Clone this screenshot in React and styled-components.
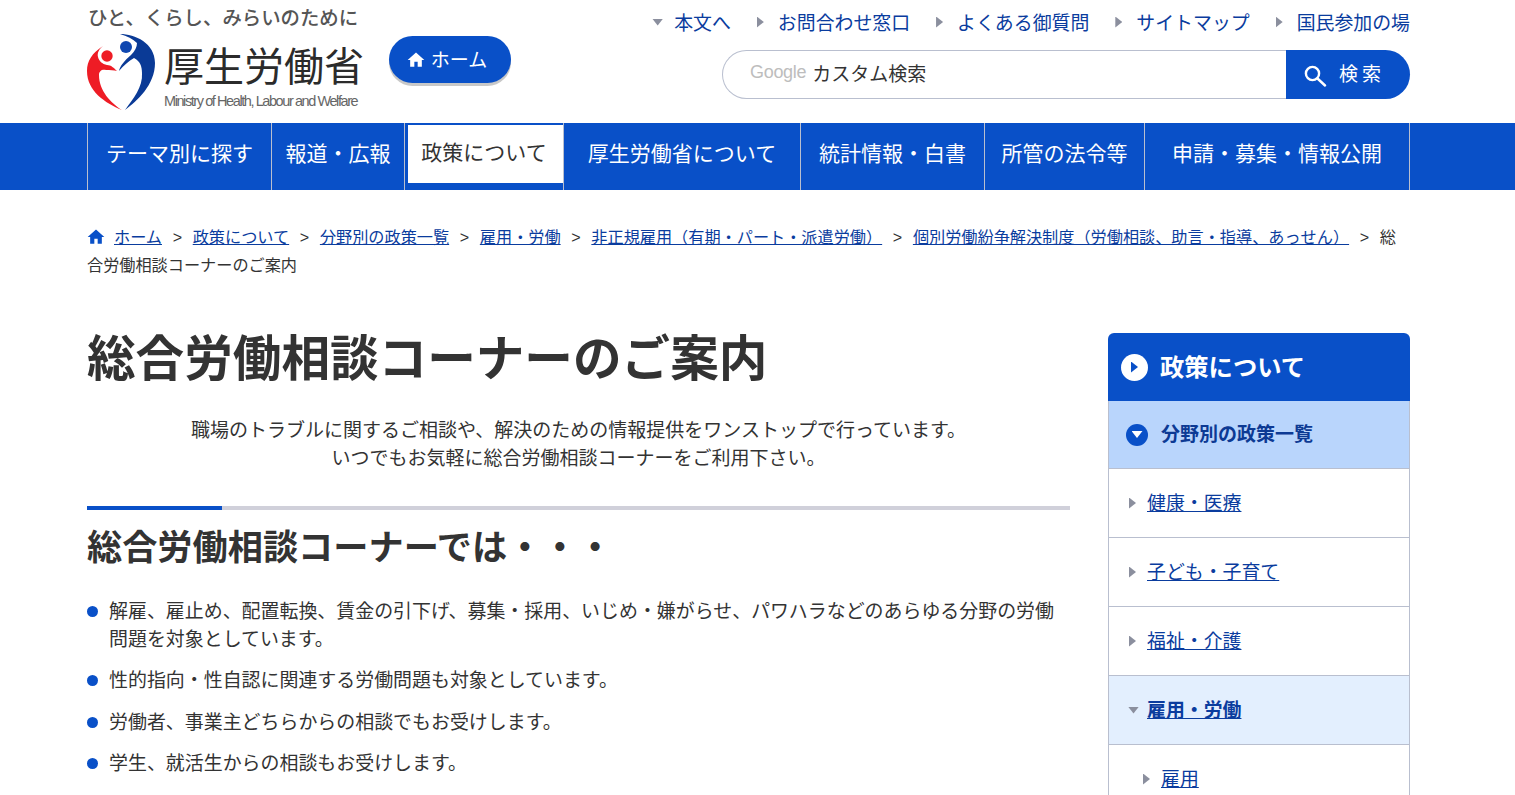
import React from 'react';
import styled, { createGlobalStyle } from 'styled-components';

const BLUE = '#0950c8';
const LINK = '#0a3c9e';
const TEXT = '#333';
const LINE = '#b9bfcf';
const GREY = '#8b8f9e';

const GlobalStyle = createGlobalStyle`
  html, body {
    margin: 0;
    padding: 0;
    overflow: hidden;
    background: #fff;
  }
  body {
    font-family: "Noto Sans CJK JP", "Liberation Sans", sans-serif;
    color: ${TEXT};
  }
  #root {
    height: 795px;
    overflow: hidden;
  }
`;

const Header = styled.header`
  display: flex;
  justify-content: space-between;
  width: 1323px;
  height: 123px;
  margin-left: 87px;
`;

const HeaderLeft = styled.div`
  display: flex;
  align-items: flex-start;
`;

const Brand = styled.div`
  display: flex;
  flex-direction: column;
  width: 302px;
`;

const Tagline = styled.div`
  margin: 5px 0 0 1px;
  height: 24px;
  font-size: 19.4px;
  line-height: 24px;
  font-weight: 500;
  color: #555;
  white-space: nowrap;
`;

const LogoRow = styled.div`
  display: flex;
  margin-top: 4px;
`;

const LogoName = styled.div`
  margin-left: 7px;
  display: flex;
  flex-direction: column;
`;

const LogoTitle = styled.div`
  margin-top: 7px;
  font-size: 40px;
  line-height: 48px;
  font-weight: 400;
  color: #2b2b2b;
  white-space: nowrap;
`;

const LogoSub = styled.div`
  margin-top: 4px;
  font-family: "Liberation Sans", sans-serif;
  font-size: 14.5px;
  line-height: 18px;
  letter-spacing: -1.42px;
  color: #666;
  white-space: nowrap;
`;

const HomeButton = styled.a`
  display: flex;
  align-items: center;
  justify-content: center;
  gap: 5px;
  width: 122px;
  height: 47px;
  margin-top: 36px;
  padding-right: 7px;
  box-sizing: border-box;
  border-radius: 24px;
  background: ${BLUE};
  box-shadow: 0 3px 0 #c8c8c8;
  color: #fff;
  font-size: 19px;
`;

const HomeLabel = styled.span`
  margin-bottom: 3px;
`;

const HeaderRight = styled.div`
  display: flex;
  flex-direction: column;
  align-items: flex-end;
`;

const TopLinks = styled.ul`
  display: flex;
  gap: 26px;
  margin: 8px 0 0;
  padding: 0;
  list-style: none;
  height: 28px;
`;

const TopLink = styled.li`
  display: flex;
  align-items: center;
  gap: ${(p) => (p.$first ? 11 : 14)}px;
  font-size: 18.9px;
  line-height: 28px;
  color: ${LINK};
  white-space: nowrap;
`;

const Triangle = styled.span`
  display: inline-block;
  flex: none;
  background: ${(p) => p.$color || GREY};
  width: ${(p) => (p.$down ? 11 : 7)}px;
  height: ${(p) => (p.$down ? 7 : 11)}px;
  clip-path: ${(p) => (p.$down ? 'polygon(0 0, 100% 0, 50% 100%)' : 'polygon(0 0, 100% 50%, 0 100%)')};
`;

const SearchBox = styled.div`
  display: flex;
  width: 688px;
  height: 49px;
  margin-top: 14px;
`;

const SearchField = styled.div`
  flex: 1;
  display: flex;
  align-items: center;
  gap: 6px;
  padding: 0 0 4px 27px;
  border: 1px solid ${LINE};
  border-right: none;
  border-radius: 25px 0 0 25px;
  font-size: 19px;
  color: #333;
`;

const GoogleMark = styled.span`
  font-family: "Liberation Sans", sans-serif;
  font-size: 18px;
  letter-spacing: -0.3px;
  color: #bdbdbd;
`;

const SearchButton = styled.div`
  display: flex;
  align-items: center;
  gap: 12px;
  width: 124px;
  padding-left: 17px;
  box-sizing: border-box;
  border-radius: 0 25px 25px 0;
  background: ${BLUE};
  color: #fff;
  font-size: 19px;
  letter-spacing: 4px;
`;

const SearchLabel = styled.span`
  margin-bottom: 4px;
`;

const Nav = styled.nav`
  display: flex;
  height: 67px;
  padding-left: 87px;
  background: ${BLUE};
`;

const NavList = styled.ul`
  display: flex;
  width: 1323px;
  margin: 0;
  padding: 0;
  list-style: none;
  border-left: 1px solid ${LINE};
`;

const NavItem = styled.li`
  display: flex;
  box-sizing: border-box;
  width: ${(p) => p.$width}px;
  border-right: 1px solid ${LINE};
`;

const NavLabel = styled.a`
  flex: 1;
  display: flex;
  align-items: center;
  justify-content: center;
  font-size: 21px;
  white-space: nowrap;
  color: ${(p) => (p.$active ? TEXT : '#fff')};
  background: ${(p) => (p.$active ? '#fff' : 'transparent')};
  margin: ${(p) => (p.$active ? '2px 0 7px 3px' : '0')};
  padding: ${(p) => (p.$active ? '0 3px 6px 0' : '0 0 9px 0')};
`;

const Breadcrumb = styled.div`
  width: 1323px;
  margin: 32px 0 0 87px;
  font-size: 16.16px;
  line-height: 28px;
  color: ${TEXT};
`;

const Crumb = styled.a`
  color: ${LINK};
  text-decoration: underline;
`;

const CrumbSep = styled.span`
  margin: 0 10.65px;
  font-family: "Liberation Sans", sans-serif;
  line-height: 1;
`;

const CrumbHome = styled.svg`
  width: 20px;
  height: 20px;
  margin: 0 8px 0 -1px;
  vertical-align: -4px;
  fill: ${BLUE};
`;

const Columns = styled.div`
  display: flex;
  justify-content: space-between;
  width: 1323px;
  margin: 55px 0 0 87px;
`;

const Main = styled.main`
  width: 983px;
`;

const Title = styled.h1`
  margin: 0;
  height: 44px;
  font-size: 48.6px;
  line-height: 44px;
  font-weight: 700;
  white-space: nowrap;
`;

const Lead = styled.p`
  margin: 38px 0 0;
  font-size: 19px;
  line-height: 28px;
  text-align: center;
`;

const SectionRule = styled.div`
  display: flex;
  height: 4px;
  margin-top: 35px;
  background: #d0d0da;
`;

const RuleAccent = styled.span`
  width: 135px;
  background: ${BLUE};
`;

const SectionTitle = styled.h2`
  margin: 12px 0 0;
  font-size: 35.2px;
  line-height: 46px;
  font-weight: 700;
  white-space: nowrap;
`;

const Points = styled.ul`
  display: flex;
  flex-direction: column;
  gap: 13.3px;
  margin: 28px 0 0;
  padding: 0;
  list-style: none;
`;

const Point = styled.li`
  position: relative;
  padding-left: 22px;
  font-size: 18.94px;
  line-height: 28px;

  &::before {
    content: '';
    position: absolute;
    left: 0;
    top: 10px;
    width: 11px;
    height: 11px;
    border-radius: 50%;
    background: ${BLUE};
  }
`;

const Aside = styled.aside`
  width: 302px;
`;

const AsideHead = styled.div`
  display: flex;
  align-items: center;
  gap: 12px;
  height: 68px;
  padding-left: 13px;
  border-radius: 6px 6px 0 0;
  background: ${BLUE};
  color: #fff;
  font-size: 24.3px;
  font-weight: 700;
`;

const RoundIcon = styled.span`
  display: flex;
  flex: none;
  align-items: center;
  justify-content: center;
  width: ${(p) => p.$size}px;
  height: ${(p) => p.$size}px;
  border-radius: 50%;
  background: ${(p) => p.$bg};
`;

const AsideSection = styled.div`
  display: flex;
  align-items: center;
  gap: 13px;
  height: 67px;
  padding-left: 17px;
  border: 1px solid ${LINE};
  border-top: none;
  background: #b9d5fc;
  color: #0d3a94;
  font-size: 19px;
  font-weight: 700;
`;

const AsideRow = styled.a`
  display: flex;
  align-items: center;
  gap: ${(p) => (p.$open ? 8 : 11)}px;
  height: 68px;
  padding-left: ${(p) => (p.$sub ? 34 : p.$open ? 19 : 20)}px;
  border: 1px solid ${LINE};
  border-top: none;
  background: ${(p) => (p.$open ? '#e3effe' : '#fff')};
  color: ${LINK};
  font-size: 18.9px;
  font-weight: ${(p) => (p.$open ? 700 : 400)};
  text-decoration: underline;
`;

// the font sits low in its box, so labels next to an icon get lifted
const Lifted = styled.span`
  margin-bottom: ${(p) => p.$by}px;
`;

const topLinks = ['お問合わせ窓口', 'よくある御質問', 'サイトマップ', '国民参加の場'];

const navItems = [
  { label: 'テーマ別に探す', width: 184 },
  { label: '報道・広報', width: 133 },
  { label: '政策について', width: 159, active: true },
  { label: '厚生労働省について', width: 237 },
  { label: '統計情報・白書', width: 184 },
  { label: '所管の法令等', width: 160 },
  { label: '申請・募集・情報公開', width: 265 },
];

const crumbs = [
  'ホーム',
  '政策について',
  '分野別の政策一覧',
  '雇用・労働',
  '非正規雇用（有期・パート・派遣労働）',
  '個別労働紛争解決制度（労働相談、助言・指導、あっせん）',
];

const points = [
  '解雇、雇止め、配置転換、賃金の引下げ、募集・採用、いじめ・嫌がらせ、パワハラなどのあらゆる分野の労働問題を対象としています。',
  '性的指向・性自認に関連する労働問題も対象としています。',
  '労働者、事業主どちらからの相談でもお受けします。',
  '学生、就活生からの相談もお受けします。',
];

const sideRows = ['健康・医療', '子ども・子育て', '福祉・介護'];

const HomeGlyph = () => (
  <svg width="20" height="20" viewBox="0 0 24 24" fill="#fff">
    <path d="M10 20v-6h4v6h5v-8h3L12 3 2 12h3v8z" />
  </svg>
);

const SearchGlyph = () => (
  <svg width="24" height="24" viewBox="0 0 24 24" fill="none" stroke="#fff" strokeWidth="2.4" strokeLinecap="round">
    <circle cx="9.5" cy="10.5" r="6.6" />
    <line x1="14.5" y1="15.5" x2="22" y2="22.5" />
  </svg>
);

const MhlwMark = () => (
  <svg width="70" height="78" viewBox="0 0 70 78" style={{ flex: 'none' }}>
    <path
      fill="#0a3a96"
      d="M33 1C48 1 68 10 68 30C68 52 50 68 38 77C46 66 56 54 55 40C55 33 53 28 47 25C42 28 36 33 32 38C33 33 37 28 44 22C48 18 50 14 50 10C46 6 40 3 33 1Z"
    />
    <circle cx="39" cy="14" r="6" fill="#0f47b0" />
    <path
      fill="#ee1c25"
      d="M16 13C5 20 0 28 0 38C0 58 18 70 35 77C24 70 12 58 12 42C12 38 15 36 19 37C23 37 27 37 30 38C27 35 24 32 20 32C15 31 12 28 11 24C10 20 12 16 16 13Z"
    />
    <circle cx="20" cy="23" r="5.7" fill="#ee1c25" />
  </svg>
);

const App = () => (
  <>
    <GlobalStyle />
    <Header>
      <HeaderLeft>
        <Brand>
          <Tagline>ひと、くらし、みらいのために</Tagline>
          <LogoRow>
            <MhlwMark />
            <LogoName>
              <LogoTitle>厚生労働省</LogoTitle>
              <LogoSub>Ministry of Health, Labour and Welfare</LogoSub>
            </LogoName>
          </LogoRow>
        </Brand>
        <HomeButton>
          <HomeGlyph />
          <HomeLabel>ホーム</HomeLabel>
        </HomeButton>
      </HeaderLeft>
      <HeaderRight>
        <TopLinks>
          <TopLink $first>
            <Triangle $down />
            本文へ
          </TopLink>
          {topLinks.map((label) => (
            <TopLink key={label}>
              <Triangle />
              {label}
            </TopLink>
          ))}
        </TopLinks>
        <SearchBox>
          <SearchField>
            <GoogleMark>Google</GoogleMark>
            カスタム検索
          </SearchField>
          <SearchButton>
            <SearchGlyph />
            <SearchLabel>検索</SearchLabel>
          </SearchButton>
        </SearchBox>
      </HeaderRight>
    </Header>

    <Nav>
      <NavList>
        {navItems.map((item) => (
          <NavItem key={item.label} $width={item.width}>
            <NavLabel $active={item.active}>{item.label}</NavLabel>
          </NavItem>
        ))}
      </NavList>
    </Nav>

    <Breadcrumb>
      <CrumbHome viewBox="0 0 24 24">
        <path d="M10 20v-6h4v6h5v-8h3L12 3 2 12h3v8z" />
      </CrumbHome>
      {crumbs.map((label) => (
        <React.Fragment key={label}>
          <Crumb>{label}</Crumb>
          <CrumbSep>&gt;</CrumbSep>
        </React.Fragment>
      ))}
      <span>総</span>
      <br />
      <span>合労働相談コーナーのご案内</span>
    </Breadcrumb>

    <Columns>
      <Main>
        <Title>総合労働相談コーナーのご案内</Title>
        <Lead>
          職場のトラブルに関するご相談や、解決のための情報提供をワンストップで行っています。
          <br />
          いつでもお気軽に総合労働相談コーナーをご利用下さい。
        </Lead>
        <SectionRule>
          <RuleAccent />
        </SectionRule>
        <SectionTitle>総合労働相談コーナーでは・・・</SectionTitle>
        <Points>
          {points.map((text) => (
            <Point key={text}>{text}</Point>
          ))}
        </Points>
      </Main>
      <Aside>
        <AsideHead>
          <RoundIcon $size={27} $bg="#fff">
            <Triangle $color={BLUE} />
          </RoundIcon>
          <Lifted $by={4}>政策について</Lifted>
        </AsideHead>
        <AsideSection>
          <RoundIcon $size={22} $bg={BLUE}>
            <Triangle $down $color="#fff" />
          </RoundIcon>
          <Lifted $by={4}>分野別の政策一覧</Lifted>
        </AsideSection>
        {sideRows.map((label) => (
          <AsideRow key={label}>
            <Triangle />
            <Lifted $by={4}>{label}</Lifted>
          </AsideRow>
        ))}
        <AsideRow $open>
          <Triangle $down />
          <Lifted $by={4}>雇用・労働</Lifted>
        </AsideRow>
        <AsideRow $sub>
          <Triangle />
          <Lifted $by={4}>雇用</Lifted>
        </AsideRow>
      </Aside>
    </Columns>
  </>
);

export default App;
